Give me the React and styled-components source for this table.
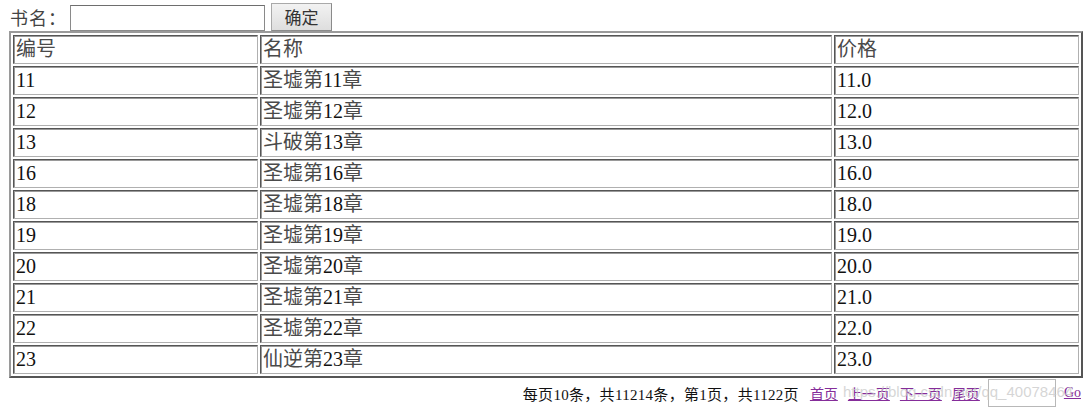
import React from "react";
import styled, { createGlobalStyle } from "styled-components";

const Global = createGlobalStyle`
  html, body { margin: 0; padding: 0; background: #fff; }
  body { font-family: "Liberation Serif", "Noto Sans CJK SC", serif; color: #111; }
`;

const Page = styled.div`
  padding: 2px 0 0 9px;
  width: 1074px;
`;

const SearchBar = styled.form`
  display: flex;
  align-items: center;
  height: 29px;
`;

const Label = styled.span`
  font-size: 18px;
  color: #444;
  margin-left: 1px;
  width: 60px;
  letter-spacing: 1px;
`;

const TextInput = styled.input`
  box-sizing: border-box;
  width: 195px;
  height: 26px;
  border: 1px solid #8a8a8a;
  border-top-color: #6e6e6e;
  margin: 2px 0 0 0;
  padding: 0 3px;
`;

const Button = styled.button`
  box-sizing: border-box;
  margin-left: 6px;
  width: 61px;
  height: 28px;
  border: 1px solid #a9a9a9;
  border-bottom-color: #8a8a8a;
  border-right-color: #8a8a8a;
  background: linear-gradient(#f2f2f2, #dedede);
  font-family: "Noto Sans CJK SC", sans-serif;
  font-size: 17px;
  color: #333;
  padding: 0;
  line-height: 26px;
`;

const Table = styled.table`
  width: 1074px;
  box-sizing: border-box;
  border: 2px solid;
  border-color: #9a9a9a #555 #555 #9a9a9a;
  border-spacing: 2px;
  table-layout: fixed;
`;

const Cell = styled.td`
  box-sizing: border-box;
  height: 29px;
  border: 1px solid;
  border-color: #555 #b0b0b0 #b0b0b0 #555;
  box-shadow: inset 1px 1px 0 #9a9a9a;
  padding: 0 0 0 2px;
  font-size: 20px;
  line-height: 25px;
  color: #111;
  white-space: nowrap;
  overflow: hidden;
  vertical-align: middle;
`;

const HeadCell = styled(Cell).attrs({ as: "th" })`
  font-weight: normal;
  text-align: left;
`;

const Han = styled.span`
  color: #4a4a4a;
`;

const Pager = styled.div`
  position: relative;
  display: flex;
  justify-content: flex-end;
  align-items: center;
  height: 30px;
  margin-right: 2px;
  color: #111;
`;

const Summary = styled.span`
  font-size: 15px;
  letter-spacing: 0.3px;
  margin-right: 11px;
`;

const PageLink = styled.a`
  color: #852d9a;
  text-decoration: underline;
  margin-right: ${(p) => (p.$last ? 0 : 10)}px;
  font-size: 14px;
`;

const JumpInput = styled.input`
  box-sizing: border-box;
  width: 68px;
  height: 28px;
  border: 1px solid #b8b8b8;
  margin: 0 8px 0 -2px;
  padding: 0;
`;

const Watermark = styled.span`
  position: absolute;
  left: 834px;
  top: 5px;
  font-family: "Liberation Sans", sans-serif;
  font-size: 15px;
  color: rgba(200, 200, 200, 0.75);
  pointer-events: none;
  white-space: nowrap;
`;

const rows = [
  ["11", "圣墟第11章", "11.0"],
  ["12", "圣墟第12章", "12.0"],
  ["13", "斗破第13章", "13.0"],
  ["16", "圣墟第16章", "16.0"],
  ["18", "圣墟第18章", "18.0"],
  ["19", "圣墟第19章", "19.0"],
  ["20", "圣墟第20章", "20.0"],
  ["21", "圣墟第21章", "21.0"],
  ["22", "圣墟第22章", "22.0"],
  ["23", "仙逆第23章", "23.0"],
];

function Mixed({ text }) {
  return text
    .split(/(\d+(?:\.\d+)?)/)
    .filter(Boolean)
    .map((part, i) =>
      /^\d/.test(part) ? <React.Fragment key={i}>{part}</React.Fragment> : <Han key={i}>{part}</Han>
    );
}

export default function App() {
  return (
    <Page>
      <Global />
      <SearchBar onSubmit={(e) => e.preventDefault()}>
        <Label>书名：</Label>
        <TextInput type="text" />
        <Button type="submit">确定</Button>
      </SearchBar>
      <Table>
        <colgroup>
          <col style={{ width: 245 }} />
          <col style={{ width: 572 }} />
          <col style={{ width: 245 }} />
        </colgroup>
        <thead>
          <tr>
            <HeadCell><Han>编号</Han></HeadCell>
            <HeadCell><Han>名称</Han></HeadCell>
            <HeadCell><Han>价格</Han></HeadCell>
          </tr>
        </thead>
        <tbody>
          {rows.map((r) => (
            <tr key={r[0]}>
              <Cell>{r[0]}</Cell>
              <Cell><Mixed text={r[1]} /></Cell>
              <Cell>{r[2]}</Cell>
            </tr>
          ))}
        </tbody>
      </Table>
      <Pager>
        <Summary>每页10条，共11214条，第1页，共1122页</Summary>
        <PageLink href="#">首页</PageLink>
        <PageLink href="#">上一页</PageLink>
        <PageLink href="#">下一页</PageLink>
        <PageLink href="#">尾页</PageLink>
        <JumpInput type="text" />
        <PageLink href="#" $last>Go</PageLink>
        <Watermark>https://blog.csdn.net/qq_40078464</Watermark>
      </Pager>
    </Page>
  );
}
